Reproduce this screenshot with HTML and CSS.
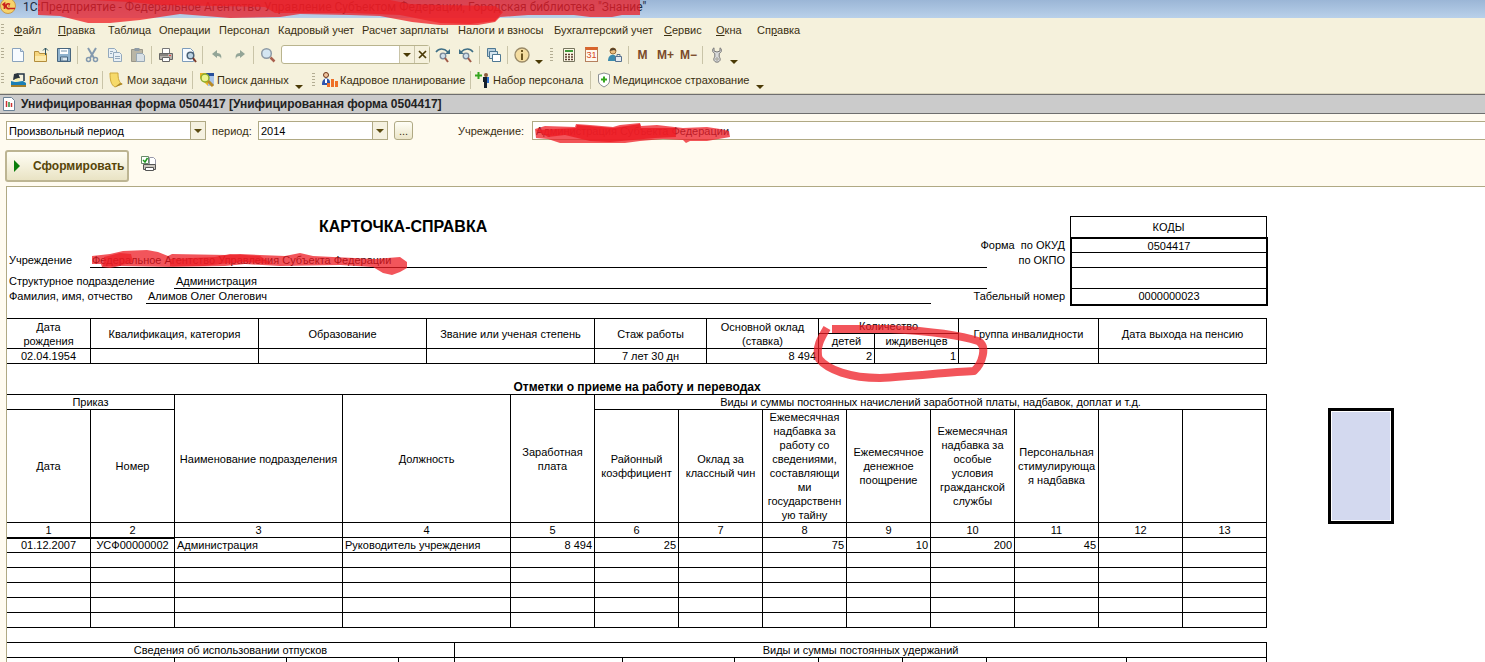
FILE: index.html
```html
<!DOCTYPE html>
<html lang="ru">
<head>
<meta charset="utf-8">
<title>1С:Предприятие</title>
<link rel="stylesheet" href="styles.css">
</head>
<body>
<header class="titlebar">
  <svg class="logo" width="17" height="14" viewBox="0 0 17 14"><circle cx="8" cy="6" r="7.500" fill="#f6d36b" stroke="#c99a4a"/><path d="M2.500 5l2-1.500V9M10 4.500C8 3 6 4 6 6s2 3 4 2.500h5M9.500 6H8.500" fill="none" stroke="#c8201c" stroke-width="1.700"/></svg>
  <h1 class="titletext">1С:Предприятие - Федеральное Агентство Управление Субъектом Федерации, Городская библиотека "Знание"</h1>
  <svg class="mark mark-title" width="660" height="28" viewBox="0 0 660 28" fill="#ed1c24">
    <path opacity=".75" d="M38 0H640V15H622L612 17H590L574 15H528L500 17L495 22L478 25H440L412 22L380 16L350 15L300 14L280 17L230 18L180 14L140 20L110 23H88L60 16L38 15Z"/>
    <path opacity=".7" d="M92 0H390L410 4L440 5L495 6L503 12L495 21L470 24L440 23L400 15L350 13L275 13L265 7L160 5L130 2Z"/>
  </svg>
</header>

<nav class="menubar">
  <a href="#"><u>Ф</u>айл</a><a href="#"><u>П</u>равка</a><a href="#">Таблица</a><a href="#">Операции</a><a href="#">Персонал</a><a href="#">Кадровый учет</a><a href="#">Расчет зарплаты</a><a href="#">Налоги и взносы</a><a href="#">Бухгалтерский учет</a><a href="#"><u>С</u>ервис</a><a href="#"><u>О</u>кна</a><a href="#">Сп<u>р</u>авка</a>
</nav>

<div class="toolbar">
  <button class="tool" aria-label="Создать"><svg width="16" height="16" viewBox="0 0 16 16"><path d="M2.500 1.500h8l3 3v10h-11z" fill="#f7fbff" stroke="#8aa3bd"/><path d="M10.500 1.500v3h3" fill="#cfe0f0" stroke="#8aa3bd"/></svg></button>
  <button class="tool" aria-label="Открыть"><svg width="16" height="16" viewBox="0 0 16 16"><path d="M1.500 14.500v-10h4l1 2h7v8z" fill="#f6d67f" stroke="#b38d3c"/><path d="M2 9h11v5H2z" fill="#fbe9ab"/><path d="M12.500 8V1M10 3.500L12.500 1 15 3.500" fill="none" stroke="#2e5563"/></svg></button>
  <button class="tool" aria-label="Сохранить"><svg width="16" height="16" viewBox="0 0 16 16"><path d="M1.500 1.500h13v13h-13z" fill="#8fb2cd" stroke="#47657e"/><path d="M4 2h8v5H4z" fill="#fff"/><path d="M4.500 10h7v4h-7z" fill="#dce8f0" stroke="#47657e"/><path d="M5 4h6M6 11v3" stroke="#7392aa"/></svg></button>
  <span class="sep"></span>
  <button class="tool" aria-label="Вырезать"><svg width="16" height="16" viewBox="0 0 16 16" fill="none" stroke="#8399ae"><path d="M4 1l6 10M12 1L6 11" stroke-width="2"/><circle cx="4.500" cy="12.500" r="2" stroke-width="1.500"/><circle cx="11.500" cy="12.500" r="2" stroke-width="1.500"/></svg></button>
  <button class="tool" aria-label="Копировать"><svg width="16" height="16" viewBox="0 0 16 16" fill="#e9f0f5" stroke="#93a9bc"><path d="M1.500 1.500h6l2 2v7h-8z"/><path d="M6.500 5.500h6l2 2v7h-8z"/><path d="M3 4.500h3M3 6.500h2M8 9.500h5M8 11.500h5"/></svg></button>
  <button class="tool" aria-label="Вставить"><svg width="16" height="16" viewBox="0 0 16 16"><path d="M1.500 2.500h11v12h-11z" fill="#b9b5a5" stroke="#99978a"/><path d="M4.500 1h5v3h-5z" fill="#8e9ba6"/><path d="M6.500 6.500h6l2 2v6h-8z" fill="#d9e1e6" stroke="#98a8b5"/></svg></button>
  <span class="sep"></span>
  <button class="tool" aria-label="Печать"><svg width="16" height="16" viewBox="0 0 16 16"><path d="M4.500 1.500h7v5h-7z" fill="#fff" stroke="#777"/><path d="M1.500 6.500h13v6h-13z" fill="#b7b3ac" stroke="#666"/><path d="M4.500 10.500h7v4h-7z" fill="#fff" stroke="#666"/><path d="M11 8.500h2" stroke="#e44"/><path d="M2 8h8" stroke="#555"/></svg></button>
  <button class="tool" aria-label="Просмотр"><svg width="16" height="16" viewBox="0 0 16 16"><path d="M1.500 1.500h8l3 3v10h-11z" fill="#f7fbff" stroke="#7d9cbb"/><circle cx="9.500" cy="8.500" r="3.300" fill="#bcd3e3" stroke="#4b6276" stroke-width="1.500"/><path d="M12 11l3 4" stroke="#7d3b2c" stroke-width="2"/></svg></button>
  <span class="sep"></span>
  <button class="tool" aria-label="Отменить"><svg width="16" height="16" viewBox="0 0 16 16"><path d="M3 7l5-4v3c4 0 5 3 4 6 0-2-1.500-3-4-3v2z" fill="#93a597"/></svg></button>
  <button class="tool" aria-label="Повторить"><svg width="16" height="16" viewBox="0 0 16 16"><path d="M13 7L8 3v3c-4 0-5 3-4 6 0-2 1.500-3 4-3v2z" fill="#93a597"/></svg></button>
  <span class="sep"></span>
  <button class="tool" aria-label="Найти"><svg width="16" height="16" viewBox="0 0 16 16"><circle cx="6.500" cy="6.500" r="4.800" fill="#d4e6f2" stroke="#8d9aa5" stroke-width="1.500"/><path d="M10.500 10.500l4 4" stroke="#a9604e" stroke-width="2.500"/></svg></button>
  <div class="search"><input type="text" aria-label="Строка поиска"><button aria-label="Список"><i class="arrow"></i></button><button aria-label="Очистить"><svg width="9" height="9" viewBox="0 0 9 9"><path d="M1 1l7 7M8 1L1 8" stroke="#4a3a05" stroke-width="1.700"/></svg></button></div>
  <button class="tool" aria-label="Найти далее"><svg width="16" height="16" viewBox="0 0 16 16" fill="none"><path d="M1 5c3-4 8-4 12 0" stroke="#3f6f86" stroke-width="1.500"/><path d="M15 2v5h-5z" fill="#3f6f86"/><circle cx="8" cy="9" r="2.800" fill="#cfdfeb" stroke="#778799" stroke-width="1.300"/><path d="M10 11l3 4" stroke="#a05a48" stroke-width="2"/></svg></button>
  <button class="tool" aria-label="Найти назад"><svg width="16" height="16" viewBox="0 0 16 16" fill="none"><path d="M15 5C12 1 7 1 3 5" stroke="#3f6f86" stroke-width="1.500"/><path d="M1 2v5h5z" fill="#3f6f86"/><circle cx="8" cy="9" r="2.800" fill="#cfdfeb" stroke="#778799" stroke-width="1.300"/><path d="M10 11l3 4" stroke="#a05a48" stroke-width="2"/></svg></button>
  <span class="sep"></span>
  <button class="tool" aria-label="Окна"><svg width="16" height="16" viewBox="0 0 16 16" stroke="#4e7893"><path d="M1.500 1.500h8v8h-8z" fill="#b7cedd"/><path d="M3.500 4.500h8v7h-8z" fill="#d7e5ee"/><path d="M6.500 7.500h8v7h-8z" fill="#fff"/></svg></button>
  <span class="sep"></span>
  <button class="tool" aria-label="Справка"><svg width="16" height="16" viewBox="0 0 16 16"><circle cx="8" cy="8" r="7" fill="#f5dda0" stroke="#9a8a67" stroke-width="1.300"/><path d="M8 6.500V13M8 3v2" stroke="#6c551f" stroke-width="2"/></svg></button>
  <button class="drop" aria-label="Еще"><i class="arrow"></i></button>
  <span class="grip"></span>
  <button class="tool" aria-label="Калькулятор"><svg width="16" height="16" viewBox="0 0 16 16"><path d="M2.500 1.500h11v13h-11z" fill="#fcf8e6" stroke="#77755f"/><path d="M4 3h8v2H4z" fill="#3f9a3a"/><path d="M4 7.500h8M4 10h8M4 12.500h8" stroke="#5d3c30" stroke-width="1.500" stroke-dasharray="2 1"/></svg></button>
  <button class="tool calendar" aria-label="Календарь"><span>31</span></button>
  <button class="tool" aria-label="Пользователи"><svg width="16" height="16" viewBox="0 0 16 16"><circle cx="6" cy="4" r="3" fill="#eabf83" stroke="#a07237"/><path d="M3 4c0-4 6-4 6 0L7 3z" fill="#53402b"/><path d="M1 14c0-8 9-8 9-1v1z" fill="#3c8bad"/><path d="M8.500 9.500h6v5h-6z" fill="#e3eaf1" stroke="#56718f"/><path d="M10 9V7.500h3V9" fill="none" stroke="#56718f"/></svg></button>
  <span class="sep"></span>
  <button class="tool mem">M</button>
  <button class="tool mem">M+</button>
  <button class="tool mem">M−</button>
  <span class="sep"></span>
  <button class="tool" aria-label="Сервис"><svg width="16" height="16" viewBox="0 0 16 16"><path d="M5 .8C3 2 2.800 5 5.800 6.500V10C4 11.500 4.500 15 8 15.200c3.500-.2 4-3.700 2.200-5.200V6.500C13.200 5 13 2 11 .8V4L8 5 5 4z" fill="#d9dada" stroke="#777"/><circle cx="8" cy="12" r="1.200" fill="#f5f1dc" stroke="#777" stroke-width=".7"/></svg></button>
  <button class="drop" aria-label="Еще"><i class="arrow"></i></button>
</div>

<div class="toolbar toolbar-text">
  <button class="cmd desk"><svg width="17" height="16" viewBox="0 0 17 16"><path d="M1 9l4 1 8-1 3 2v4H1z" fill="#1b7fb5"/><path d="M1 13h15v2H1z" fill="#a57e28"/><path d="M4 2l4-1 2 5-7 2z" fill="#2c353e"/><path d="M8 2h6v7" fill="none" stroke="#234" stroke-width="1.500"/><path d="M5 7l4-1 1 3-5 1z" fill="#f8f0b0"/></svg>Рабочий стол</button>
  <span class="sep"></span>
  <button class="cmd tasks"><svg width="16" height="16" viewBox="0 0 16 16"><path d="M1 1h8c0 6 1 9 4 11l-7 3C2 13 1 8 1 1z" fill="#f6da6a" stroke="#cda83c"/><path d="M6 15l8-3-3-1z" fill="#a88428"/></svg>Мои задачи</button>
  <span class="sep"></span>
  <button class="cmd find"><svg width="16" height="16" viewBox="0 0 16 16"><path d="M1 1h14v13H9L1 6z" fill="#e8b424"/><path d="M7 1h8v3H7z" fill="#274f9c"/><path d="M9 4h6v10H9z" fill="#a9c4ea"/><circle cx="6" cy="6" r="4" fill="#eef58b" stroke="#8cac2d" stroke-width="1.500"/><path d="M9 9l5 5" stroke="#b98a25" stroke-width="3"/></svg>Поиск данных</button>
  <button class="drop" aria-label="Еще"><i class="arrow"></i></button>
  <span class="grip"></span>
  <button class="cmd plan"><svg width="17" height="16" viewBox="0 0 17 16"><circle cx="5" cy="3" r="2.500" fill="#f0c49c" stroke="#6b3419"/><path d="M1 12c0-7 8-7 8-2v3H1z" fill="#2c55b0"/><path d="M4 7h2v4H4z" fill="#fff"/><path d="M6 15v-4h3v4zM10 15V7h3v8zM14 15V9h3v6z" fill="#ee6f27"/></svg>Кадровое планирование</button>
  <span class="sep"></span>
  <button class="cmd hire"><svg width="16" height="16" viewBox="0 0 16 16"><path d="M3.500 0v7M0 3.500h7" stroke="#35a51e" stroke-width="2"/><circle cx="11" cy="3" r="2" fill="#8c5b3b"/><path d="M8 5h5v5h-1v6H9v-6H8z" fill="#15202c"/><path d="M12 5h2v6h-2z" fill="#2b6fd1"/></svg>Набор персонала</button>
  <span class="sep"></span>
  <button class="cmd med"><svg width="14" height="16" viewBox="0 0 14 16"><path d="M1.500 2.500L7 1l5.500 1.500V9c0 3-3 4.500-5.500 6C4.500 13.500 1.500 12 1.500 9z" fill="#fff" stroke="#8a8f93"/><path d="M7 4.500v6M4 7.500h6" stroke="#35a51e" stroke-width="2"/></svg>Медицинское страхование</button>
  <button class="drop" aria-label="Еще"><i class="arrow"></i></button>
</div>

<h2 class="wintitle"><svg width="12" height="14" viewBox="0 0 12 14"><path d="M.5.5h8l3 3v10H.5z" fill="#fff" stroke="#6b8297"/><path d="M3.500 4v6" stroke="#c33" stroke-width="1.500"/><path d="M6 5v5" stroke="#2b8a3a" stroke-width="1.500"/><path d="M8.500 6v4" stroke="#c33" stroke-width="1.500"/></svg>Унифицированная форма 0504417 [Унифицированная форма 0504417]</h2>

<form class="params" onsubmit="return false">
  <div class="line">
    <span class="combo kind"><select aria-label="Вид периода"><option>Произвольный период</option></select></span>
    <label for="year">период:</label>
    <span class="combo year"><select id="year"><option>2014</option></select></span>
    <button class="dots" aria-label="Выбрать период">...</button>
    <label class="orglabel" for="org">Учреждение:</label>
    <div class="orgbox">
      <input id="org" type="text" value="Администрация Субъекта Федерации">
      <svg class="mark mark-org" width="200" height="24" viewBox="532 120 200 24" fill="#ed1c24">
        <path opacity=".75" d="M535 128L545 125L575 126L576 123L590 124L613 126L620 124L640 122L641 125L657 124L683 127L707 126L720 128L729 130L730 136L707 140L690 140L686 142L683 139L663 138L640 140L625 142H560L548 138L536 137Z"/>
        <path opacity=".85" d="M536 129L576 127L577 124L613 127L640 123L641 127L675 127L676 136L655 137L610 141L590 140L565 134L548 136Z"/>
      </svg>
    </div>
  </div>
  <div class="line">
    <button class="run"><i class="play"></i>Сформировать</button>
    <button class="printset" aria-label="Настройка печати"><svg width="16" height="16" viewBox="0 0 16 16"><path d="M8.500 1.500h4l2 2v5h-6z" fill="#fff" stroke="#99a"/><path d="M2.500 8.500h12v5h-12z" fill="#c9c5bd" stroke="#555"/><path d="M4.500 11.500h8v3h-8z" fill="#fff" stroke="#555"/><path d="M.5.500h7v7h-7z" fill="#fff" stroke="#6a8a6a"/><path d="M2 4l2 2 2.500-4" fill="none" stroke="#1c9a1c" stroke-width="1.500"/></svg></button>
  </div>
</form>

<main class="sheet">
  <div class="doc">
    <section class="head">
      <h3 class="cardtitle">КАРТОЧКА-СПРАВКА</h3>
      <p class="field f-org"><span>Учреждение</span><b>Федеральное Агентство Управления Субъекта Федерации</b></p>
      <p class="field f-dep"><span>Структурное подразделение</span><b>Администрация</b></p>
      <p class="field f-fio"><span>Фамилия, имя, отчество</span><b>Алимов Олег Олегович</b></p>
      <p class="rlabel r2">Форма&nbsp; по ОКУД</p>
      <p class="rlabel r3">по ОКПО</p>
      <p class="rlabel r5">Табельный номер</p>
      <div class="codes">
        <span class="chead">КОДЫ</span>
        <div class="cbody"><span>0504417</span><span></span><span></span><span>0000000023</span></div>
      </div>
    </section>

    <table class="grid person">
      <colgroup><col class="c84"><col class="c168"><col class="c168"><col class="c168"><col class="c112"><col class="c112"><col class="c56"><col class="c84"><col class="c140"><col class="c168"></colgroup>
      <tr><th rowspan="2">Дата<br>рождения</th><th rowspan="2">Квалификация, категория</th><th rowspan="2">Образование</th><th rowspan="2">Звание или ученая степень</th><th rowspan="2">Стаж работы</th><th rowspan="2">Основной оклад (ставка)</th><th colspan="2">Количество</th><th rowspan="2">Группа инвалидности</th><th rowspan="2">Дата выхода на пенсию</th></tr>
      <tr><th>детей</th><th>иждивенцев</th></tr>
      <tr><td class="c">02.04.1954</td><td></td><td></td><td></td><td class="c">7 лет 30 дн</td><td class="r">8 494</td><td class="r">2</td><td class="r">1</td><td></td><td></td></tr>
    </table>

    <h4 class="subtitle">Отметки о приеме на работу и переводах</h4>

    <table class="grid moves">
      <colgroup><col class="c84"><col class="c84"><col class="c168"><col class="c168"><col class="c84"><col class="c84"><col class="c84"><col class="c84"><col class="c84"><col class="c84"><col class="c84"><col class="c84"><col class="c84"></colgroup>
      <tr><th colspan="2">Приказ</th><th rowspan="2">Наименование подразделения</th><th rowspan="2">Должность</th><th rowspan="2">Заработная плата</th><th colspan="8">Виды и суммы постоянных начислений заработной платы, надбавок, доплат и т.д.</th></tr>
      <tr class="tall"><th>Дата</th><th>Номер</th><th>Районный коэффициент</th><th>Оклад за классный чин</th><th>Ежемесячная надбавка за работу со сведениями, составляющи<br>ми<br>государственн<br>ую тайну</th><th>Ежемесячное денежное поощрение</th><th>Ежемесячная надбавка за особые<br>условия гражданской службы</th><th>Персональная стимулирующа<br>я надбавка</th><th></th><th></th></tr>
      <tr class="nums"><td>1</td><td>2</td><td>3</td><td>4</td><td>5</td><td>6</td><td>7</td><td>8</td><td>9</td><td>10</td><td>11</td><td>12</td><td>13</td></tr>
      <tr><td class="c sel">01.12.2007</td><td class="c sel">УСФ00000002</td><td>Администрация</td><td>Руководитель учреждения</td><td class="r">8 494</td><td class="r">25</td><td></td><td class="r">75</td><td class="r">10</td><td class="r">200</td><td class="r">45</td><td></td><td></td></tr>
      <tr><td></td><td></td><td></td><td></td><td></td><td></td><td></td><td></td><td></td><td></td><td></td><td></td><td></td></tr>
      <tr><td></td><td></td><td></td><td></td><td></td><td></td><td></td><td></td><td></td><td></td><td></td><td></td><td></td></tr>
      <tr><td></td><td></td><td></td><td></td><td></td><td></td><td></td><td></td><td></td><td></td><td></td><td></td><td></td></tr>
      <tr><td></td><td></td><td></td><td></td><td></td><td></td><td></td><td></td><td></td><td></td><td></td><td></td><td></td></tr>
      <tr><td></td><td></td><td></td><td></td><td></td><td></td><td></td><td></td><td></td><td></td><td></td><td></td><td></td></tr>
    </table>

    <table class="grid leave">
      <colgroup><col class="c168"><col class="c112"><col class="c112"><col class="c56"><col class="c168"><col class="c112"><col class="c84"><col class="c84"><col class="c84"><col class="c140"><col class="c140"></colgroup>
      <tr><th colspan="4">Сведения об использовании отпусков</th><th colspan="7">Виды и суммы постоянных удержаний</th></tr>
      <tr><td></td><td></td><td></td><td></td><td></td><td></td><td></td><td></td><td></td><td></td><td></td></tr>
    </table>
  </div>
  <div class="shape"></div>
  <svg class="mark mark-sheet" width="1000" height="200" viewBox="7 187 1000 200" fill="#ed1c24">
    <path opacity=".75" d="M92 256L110 254L123 251L147 250L158 252L168 256L172 254L227 255L240 254L260 255L285 256L300 253L313 256L333 257L375 259L400 257L407 262V268L400 272L392 275L383 273L373 267L340 265L280 266L245 264L225 266L173 267L120 266L110 268L102 267L101 264H92Z"/>
    <path opacity=".7" d="M104 257L120 253L131 254L133 262L118 266L103 266ZM170 259L215 257L230 254L260 256L272 264L245 262L220 264L205 266H170Z"/>
    <path opacity=".75" fill="none" stroke="#ed1c24" stroke-width="8" stroke-linejoin="round" d="M832 329H890C925 331 960 335 978 341C988 346 982 364 974 371C950 372 915 376 880 378C850 378 828 370 819 359C815 348 821 338 827 328"/>
  </svg>
</main>
</body>
</html>
```
FILE: styles.css
```css
* { box-sizing: border-box; }
body {
  margin: 0;
  height: 100vh;
  overflow: hidden;
  display: flex;
  flex-direction: column;
  background: #fffbf0;
  color: #000;
  font: 11px/14px "Liberation Sans", Arial, sans-serif;
}
h1, h2, h3, h4, p { margin: 0; }
button, input, select { font: inherit; color: inherit; }
button { padding: 0; border: 0; background: none; }
svg { flex: none; }

.mark { position: absolute; pointer-events: none; z-index: 2; }

/* title bar */
.titlebar {
  position: relative;
  flex: none;
  display: flex;
  height: 18px;
  gap: 6px;
  background: linear-gradient(#9bb6d6, #b9d1ea);
}
.titletext {
  font: 12px/14px Roboto, "Noto Sans", sans-serif;
  color: #1c2a3c;
  white-space: nowrap;
}
.mark-title { left: 0; top: 0; }

/* menu */
.menubar {
  position: relative;
  flex: none;
  display: grid;
  grid-template-columns: 44px 50px 51px 60px 59px 84px 96px 96px 110px 52px 41px auto;
  align-items: center;
  height: 24px;
  padding-left: 14px;
  background: #f5f1dc;
  color: #3a2f10;
}
.menubar a { color: inherit; text-decoration: none; white-space: nowrap; }
.menubar::before, .toolbar::before {
  content: "";
  position: absolute;
  left: 1px;
  top: 6px;
  width: 3px;
  height: 12px;
  background: repeating-linear-gradient(#b3ad93 0 1px, transparent 1px 3px);
}

/* toolbars */
.toolbar {
  position: relative;
  flex: none;
  display: flex;
  align-items: center;
  height: 25px;
  padding-left: 6px;
  background: #f5f1dc;
  color: #3a2f10;
}
.tool { display: flex; align-items: center; justify-content: center; width: 23px; height: 22px; }
.sep { width: 5px; height: 18px; background: linear-gradient(#c9c4a8, #c9c4a8) center / 1px 100% no-repeat; }
.grip { width: 12px; height: 14px; background: repeating-linear-gradient(#b3ad93 0 1px, transparent 1px 3px) center / 3px 100% no-repeat; }
.arrow { display: block; width: 0; border: 4px solid transparent; border-top-color: #4a3a05; border-bottom: 0; }
.drop { display: flex; align-items: flex-end; justify-content: center; width: 12px; height: 18px; }
.mem { font-weight: bold; font-size: 12px; color: #7a4a2a; }
.calendar span {
  width: 13px;
  height: 15px;
  border: 1px solid #b5805e;
  border-top: 3px solid #d8652d;
  background: #fff8ee;
  color: #d5451c;
  font-size: 9px;
  line-height: 11px;
}
.search { display: flex; width: 149px; height: 19px; margin: 0 1px 0 2px; border: 1px solid #b9b48e; border-radius: 3px; background: #fff; }
.search input { flex: 1; min-width: 0; border: 0; padding: 0 3px; background: none; }
.search button { display: flex; align-items: center; justify-content: center; width: 15px; background: #f5f1dc; border-left: 1px solid #c9c4a8; }

.toolbar-text { height: 27px; padding-left: 8px; border-bottom: 1px solid #d8d3bd; }
.toolbar-text .grip { margin-left: 2px; }
.cmd { display: flex; align-items: center; gap: 2px; padding: 0 2px; white-space: nowrap; }
.desk { width: 92px; }
.tasks { width: 85px; padding-left: 4px; }
.find { width: 98px; padding-left: 4px; }
.plan { width: 149px; }
.hire { width: 115px; }
.med { width: 161px; padding-left: 4px; }

/* form window */
.wintitle {
  flex: none;
  display: flex;
  align-items: center;
  gap: 6px;
  height: 20px;
  padding-left: 3px;
  border-top: 1px solid #6e6e6e;
  border-bottom: 1px solid #6e6e6e;
  background: #cbcbcb;
  color: #222;
  font-size: 12px;
}
.params { flex: none; padding: 7px 0 4px 6px; color: #3a2f10; }
.line { display: flex; align-items: center; }
.combo { position: relative; display: block; height: 19px; border: 1px solid #b0a984; background: #fff; color: #000; }
.combo::after {
  content: "";
  position: absolute;
  right: 3px;
  top: 7px;
  border: 4px solid transparent;
  border-top-color: #5a4a10;
  border-bottom: 0;
  pointer-events: none;
}
.combo select {
  appearance: none;
  width: 100%;
  height: 17px;
  border: 0;
  padding: 0 2px;
  border-radius: 0;
  background: linear-gradient(90deg, #b0a984 1px, #f5f1e0 1px) right / 15px 100% no-repeat;
}
.kind { width: 200px; margin-right: 6px; }
.year { width: 130px; margin: 0 6px 0 7px; }
.line label[for="year"] { width: 39px; white-space: nowrap; }
.dots { width: 19px; height: 19px; border: 1px solid #b0a984; border-radius: 3px; background: linear-gradient(#fffef6, #ebe5c8); }
.orglabel { width: 74px; margin-left: 45px; white-space: nowrap; }
.orgbox { position: relative; flex: 1; }
.orgbox input { display: block; width: 100%; height: 19px; border: 1px solid #b0a984; border-right: 0; padding: 0 3px; background: #fff; color: #223; }
.mark-org { left: 0; top: 0; }
.run {
  display: flex;
  align-items: center;
  gap: 13px;
  width: 124px;
  height: 32px;
  margin-top: 10px;
  margin-left: -1px;
  padding-left: 7px;
  border: 2px solid #bdb592;
  border-radius: 3px;
  background: linear-gradient(#fffef4, #e9e3c4);
  color: #574508;
  font-weight: bold;
  font-size: 12px;
}
.play { width: 0; border: 6px solid transparent; border-left-color: #0a7d0a; border-right: 0; }
.printset { margin: 8px 0 0 12px; }

/* spreadsheet */
.sheet {
  position: relative;
  flex: 1;
  min-height: 0;
  display: flex;
  align-items: flex-start;
  overflow: hidden;
  margin-left: 6px;
  border: 1px solid #b0a984;
  border-width: 1px 0 0 1px;
  background: #fff;
}
.mark-sheet { left: 0; top: 0; }
.doc { flex: none; padding-top: 29px; }
.head {
  display: grid;
  grid-template-columns: 980px 83px 198px;
  grid-template-rows: 22px 15px 15px 21px 15px;
  margin-right: -1px;
}
.cardtitle { grid-area: 1 / 1; padding-left: 312px; align-self: center; font-size: 16px; line-height: 20px; }
.field { display: flex; align-items: flex-end; grid-column: 1; white-space: nowrap; }
.field span { padding-left: 2px; line-height: 15px; }
.field b { flex: 1; padding-left: 2px; border-bottom: 1px solid #000; font-weight: normal; }
.f-org { grid-row: 3; }
.f-org span { width: 83px; }
.f-dep { grid-row: 4; }
.f-dep span { width: 167px; }
.f-fio { grid-row: 5; margin-right: 56px; }
.f-fio span { width: 139px; }
.rlabel { grid-column: 1 / 3; justify-self: end; padding-right: 5px; line-height: 15px; white-space: nowrap; }
.r2 { grid-row: 2; }
.r3 { grid-row: 3; grid-column: 2; }
.r5 { grid-row: 5; }
.codes { grid-area: 1 / 3 / 6 / 4; display: flex; flex-direction: column; text-align: center; }
.chead { height: 21px; margin-right: 1px; border: 1px solid #000; border-bottom: 0; line-height: 20px; }
.cbody { display: grid; grid-template-rows: 14px 15px 21px 15px; border: 2px solid #000; line-height: 14px; }
.cbody span { border-bottom: 1px solid #000; }
.cbody span:last-child { border: 0; }

.grid { table-layout: fixed; width: 1260px; border-collapse: separate; border-spacing: 0; border-top: 1px solid #000; }
.grid th, .grid td { height: 15px; padding: 0 2px; border: 0 solid #000; border-width: 0 1px 1px 0; font-weight: normal; overflow: hidden; white-space: nowrap; line-height: 14px; }
.grid th { padding: 0; white-space: normal; }
.c56 { width: 56px; }
.c84 { width: 84px; }
.c112 { width: 112px; }
.c140 { width: 140px; }
.c168 { width: 168px; }
.grid .c, .grid .nums td { text-align: center; }
.grid .r { text-align: right; }
.grid .tall th { height: 113px; }
.grid .sel { box-shadow: inset 0 1px #000; }
.person { margin-top: 14px; }
.subtitle { padding: 16px 0 0; font-size: 12px; line-height: 14px; text-align: center; }
.leave { margin-top: 14px; }
.shape { flex: none; width: 66px; height: 116px; margin: 221px 0 0 61px; border: 3px solid #000; background: #d3d9ef; box-shadow: inset 0 0 0 1px #fff; }
```
